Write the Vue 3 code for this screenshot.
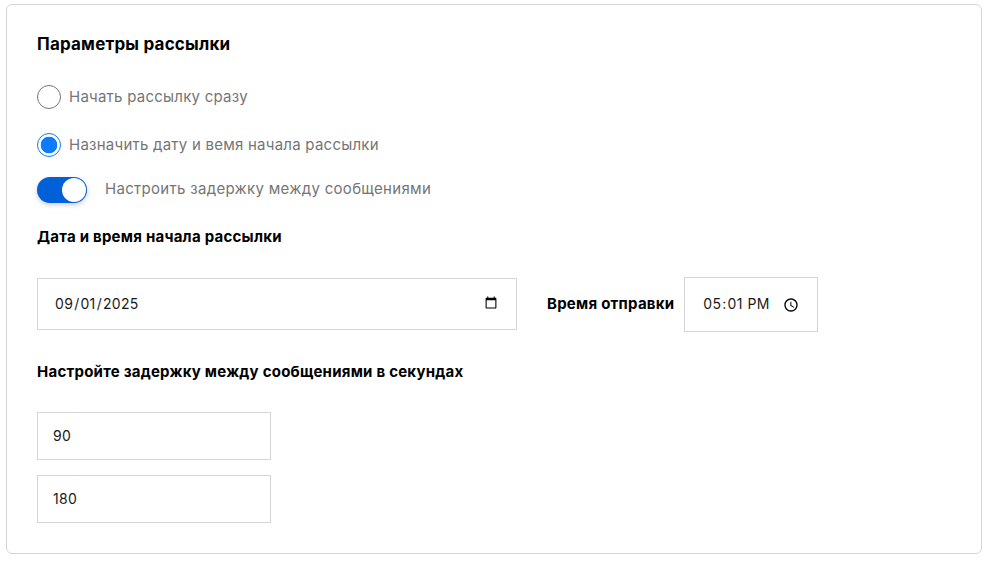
<script setup>
import { ref } from 'vue'
const mode = ref('later')
const delay = ref(true)
const date = ref('2025-09-01')
const time = ref('17:01')
const minDelay = ref('90')
const maxDelay = ref('180')
</script>

<template>
  <section class="card">
    <h2 class="title">Параметры рассылки</h2>
    <label class="radio-row first">
      <input v-model="mode" class="radio" type="radio" name="mode" value="now" />
      <span>Начать рассылку сразу</span>
    </label>
    <label class="radio-row second">
      <input v-model="mode" class="radio" type="radio" name="mode" value="later" />
      <span>Назначить дату и вемя начала рассылки</span>
    </label>
    <label class="switch-row">
      <input v-model="delay" class="switch-input" type="checkbox" />
      <span class="switch"><span class="knob"></span></span>
      <span class="switch-text">Настроить задержку между сообщениями</span>
    </label>
    <h3 class="label date-label">Дата и время начала рассылки</h3>
    <div class="date-row">
      <input v-model="date" class="field date" type="date" />
      <span class="label time-label">Время отправки</span>
      <input v-model="time" class="field time" type="time" />
    </div>
    <h3 class="label delay-label">Настройте задержку между сообщениями в секундах</h3>
    <div class="delay-fields">
      <input v-model="minDelay" class="field number" type="text" />
      <input v-model="maxDelay" class="field number" type="text" />
    </div>
  </section>
</template>

<style scoped>
.card {
  box-sizing: border-box;
  width: 976px;
  height: 550px;
  margin: 4px 0 0 6px;
  padding: 29px 30px 0;
  border: 1px solid #d5d5d5;
  border-radius: 6px;
  background: #fff;
  font-family: Inter, "Noto Sans", sans-serif;
  color: #000;
}
.title {
  margin: 0;
  font-size: 17px;
  line-height: 20px;
  font-weight: 700;
  letter-spacing: .2px;
}
.radio-row, .switch-row {
  display: flex;
  align-items: center;
  color: #757575;
  font-size: 15px;
  line-height: 24px;
  letter-spacing: .24px;
}
.radio-row { gap: 8px; }
.first { margin-top: 31px; }
.second { margin-top: 24px; }
.radio {
  appearance: none;
  box-sizing: border-box;
  width: 24px;
  height: 24px;
  margin: 0;
  border: 1px solid #757575;
  border-radius: 50%;
  background: #fff;
}
.radio:checked {
  border-color: #0a7cff;
  background: radial-gradient(circle, #0a7cff 0 8px, #fff 8.6px);
}
.switch-row { gap: 18px; margin-top: 20px; }
.switch-text { margin-bottom: 2px; letter-spacing: .3px; }
.switch-input { display: none; }
.switch {
  display: flex;
  justify-content: flex-end;
  box-sizing: border-box;
  width: 50px;
  height: 26px;
  padding: 1px;
  border-radius: 13px;
  background: #0060d8;
  box-shadow: 0 2px 5px rgba(0, 0, 0, .2);
}
.knob {
  width: 24px;
  height: 24px;
  border-radius: 50%;
  background: #fff;
}
.label {
  margin: 0;
  font-size: 15px;
  line-height: 20px;
  font-weight: 700;
  letter-spacing: .24px;
}
.date-label { margin-top: 24px; }
.date-row {
  display: flex;
  align-items: flex-start;
  margin-top: 30px;
}
.field {
  box-sizing: border-box;
  border: 1px solid #d5d5d5;
  border-radius: 0;
  outline: none;
  background: #fff;
  color: #1a1a1a;
  font-family: inherit;
  font-size: 14px;
  letter-spacing: .3px;
}
.date {
  width: 480px;
  height: 52px;
  margin-top: 1px;
  padding: 0 16px 2px;
}
.time-label { margin-left: 30px; align-self: center; margin-bottom: 2px; }
.time {
  width: 134px;
  height: 55px;
  margin-left: 10px;
  padding: 0 18px 3px 17px;
}
.time::-webkit-calendar-picker-indicator {
  width: 16px;
  height: 16px;
  margin-right: -3px;
  margin-top: 4px;
}
.delay-label { margin-top: 30px; }
.delay-fields {
  display: flex;
  flex-direction: column;
  gap: 15px;
  margin-top: 30px;
}
.number {
  width: 234px;
  height: 48px;
  padding: 0 15px 2px;
}
</style>
